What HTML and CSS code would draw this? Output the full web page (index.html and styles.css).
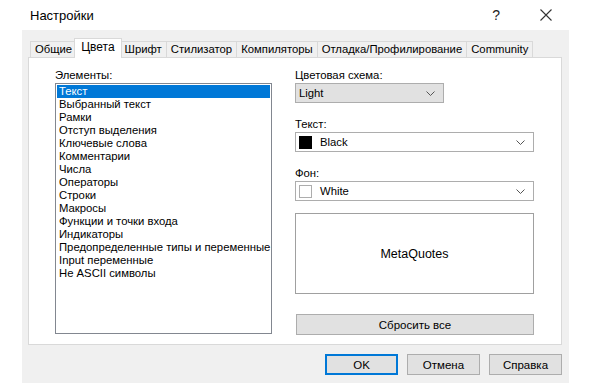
FILE: index.html
```html
<!DOCTYPE html>
<html lang="ru">
<head>
    <meta charset="UTF-8">
    <title>Настройки</title>
    <link rel="stylesheet" href="styles.css">
</head>
<body>
    <div class="titlebar">
        <span class="title">Настройки</span>
        <span class="help">?</span>
        <span class="close">
            <svg width="12" height="12" viewBox="0 0 12 12"><path d="M0.5 0.5 L11.5 11.5 M11.5 0.5 L0.5 11.5" stroke="#333" stroke-width="1.1" fill="none"/></svg>
        </span>
    </div>
    <div class="dialog">
        <div class="tabs">
            <div class="tab">Общие</div>
            <div class="tab active">Цвета</div>
            <div class="tab">Шрифт</div>
            <div class="tab">Стилизатор</div>
            <div class="tab">Компиляторы</div>
            <div class="tab">Отладка/Профилирование</div>
            <div class="tab">Community</div>
        </div>
        <div class="panel">
            <div class="col-left">
                <div class="label">Элементы:</div>
                <ul class="listbox">
                    <li class="selected">Текст</li>
                    <li>Выбранный текст</li>
                    <li>Рамки</li>
                    <li>Отступ выделения</li>
                    <li>Ключевые слова</li>
                    <li>Комментарии</li>
                    <li>Числа</li>
                    <li>Операторы</li>
                    <li>Строки</li>
                    <li>Макросы</li>
                    <li>Функции и точки входа</li>
                    <li>Индикаторы</li>
                    <li>Предопределенные типы и переменные</li>
                    <li>Input переменные</li>
                    <li>Не ASCII символы</li>
                </ul>
            </div>
            <div class="col-right">
                <div class="label">Цветовая схема:</div>
                <div class="combo scheme">
                    <span class="combo-text">Light</span>
                    <svg class="chevron" width="9" height="5" viewBox="0 0 9 5"><path d="M0.5 0.5 L4.5 4.5 L8.5 0.5" stroke="#555" fill="none"/></svg>
                </div>
                <div class="label">Текст:</div>
                <div class="combo color">
                    <span class="swatch black"></span>
                    <span class="combo-text">Black</span>
                    <svg class="chevron" width="9" height="5" viewBox="0 0 9 5"><path d="M0.5 0.5 L4.5 4.5 L8.5 0.5" stroke="#555" fill="none"/></svg>
                </div>
                <div class="label">Фон:</div>
                <div class="combo color">
                    <span class="swatch white"></span>
                    <span class="combo-text">White</span>
                    <svg class="chevron" width="9" height="5" viewBox="0 0 9 5"><path d="M0.5 0.5 L4.5 4.5 L8.5 0.5" stroke="#555" fill="none"/></svg>
                </div>
                <div class="preview">MetaQuotes</div>
                <button type="button" class="btn reset">Сбросить все</button>
            </div>
        </div>
        <div class="buttons">
            <button type="button" class="btn default">OK</button>
            <button type="button" class="btn">Отмена</button>
            <button type="button" class="btn">Справка</button>
        </div>
    </div>
</body>
</html>
```

FILE: styles.css
```css
body {
    margin: 0;
    background: #ffffff;
    font-family: "Liberation Sans", Arial, sans-serif;
    font-size: 11.3px;
    color: #000000;
    width: 591px;
    height: 383px;
    overflow: hidden;
}
.titlebar {
    height: 30px;
    display: flex;
    align-items: center;
}
.title {
    margin-left: 30px;
    font-size: 13px;
    flex: 1;
}
.help {
    font-size: 14px;
    color: #222;
    margin-right: 40px;
}
.close {
    display: flex;
    margin-right: 39px;
}
.dialog {
    margin-left: 22px;
    width: 547px;
    height: 353px;
    background: #f0f0f0;
    padding: 8px 7px 0 6px;
    box-sizing: border-box;
}
.tabs {
    display: flex;
    align-items: flex-end;
    height: 19px;
    margin-left: 2px;
}
.tab {
    height: 16px;
    line-height: 15px;
    padding: 0 4px;
    border: 1px solid #d9d9d9;
    border-bottom: none;
    border-right: none;
    background: #f0f0f0;
    box-sizing: border-box;
    white-space: nowrap;
    position: relative;
}
.tab:last-child {
    border-right: 1px solid #d9d9d9;
}
.tab.active {
    height: 20px;
    line-height: 17px;
    font-size: 12px;
    background: #ffffff;
    padding: 0 6px;
    border-right: 1px solid #d9d9d9;
    margin: 0 -1px 0 -2px;
    top: 1px;
    z-index: 1;
}
.tab.active + .tab {
    border-left: none;
}
.panel {
    height: 288px;
    background: #ffffff;
    border: 1px solid #d9d9d9;
    box-sizing: border-box;
    display: flex;
    padding: 9px 0 0 26px;
}
.label {
    height: 16px;
    line-height: 16px;
}
.col-left {
    width: 217px;
}
.listbox {
    list-style: none;
    margin: 0;
    padding: 1px;
    width: 217px;
    height: 251px;
    border: 1px solid #828790;
    box-sizing: border-box;
    overflow: hidden;
}
.listbox li {
    height: 13px;
    line-height: 13px;
    padding-left: 2px;
    white-space: nowrap;
}
.listbox li.selected {
    background: #0078d7;
    color: #ffffff;
}
.col-right {
    margin-left: 23px;
    width: 239px;
}
.combo {
    height: 20px;
    border: 1px solid #adadad;
    box-sizing: border-box;
    display: flex;
    align-items: center;
    padding: 0 8px 0 3px;
    margin-bottom: 13px;
}
.combo.scheme {
    width: 149px;
    background: #e1e1e1;
}
.combo.color {
    background: #ffffff;
}
.combo-text {
    flex: 1;
}
.swatch {
    width: 13px;
    height: 13px;
    box-sizing: border-box;
    margin-right: 8px;
}
.swatch.black {
    background: #000000;
}
.swatch.white {
    background: #ffffff;
    border: 1px solid #adadad;
}
.preview {
    height: 81px;
    border: 1px solid #a0a0a0;
    box-sizing: border-box;
    display: flex;
    align-items: center;
    justify-content: center;
    margin-top: -1px;
    font-size: 12.5px;
}
.btn {
    font-family: inherit;
    font-size: 11.5px;
    height: 21px;
    background: #e1e1e1;
    border: 1px solid #adadad;
    padding: 0;
    color: #000000;
}
.reset {
    margin-top: 20px;
    width: 238px;
    margin-left: 1px;
}
.buttons {
    display: flex;
    justify-content: flex-end;
    gap: 9px;
    margin-top: 9px;
}
.buttons .btn {
    width: 73px;
}
.btn.default {
    border: 2px solid #0078d7;
}
```
